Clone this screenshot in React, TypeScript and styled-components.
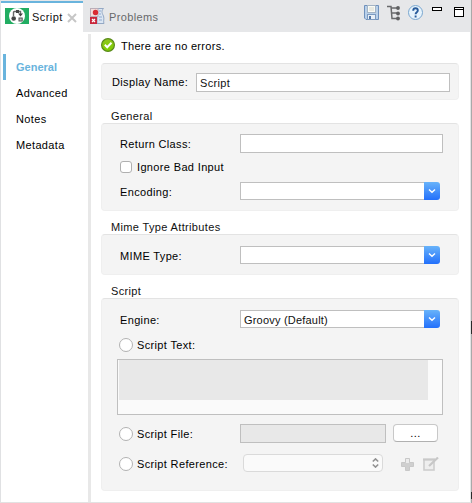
import React from "react";
import styled, { createGlobalStyle } from "styled-components";

const GlobalStyle = createGlobalStyle`
  * { box-sizing: border-box; }
  body {
    margin: 0;
    background: #fff;
    color: #111;
    font: 11px/14px "Liberation Sans", Arial, sans-serif;
    letter-spacing: 0.35px;
  }
  svg { display: block; flex: none; }
`;

const Screen = styled.div`
  display: flex;
  width: 472px;
  height: 503px;
  overflow: hidden;
`;

const WindowEdge = styled.div`
  width: 1px;
  flex: none;
  background: linear-gradient(
    #a9a9a9 321px, #2b2b2b 321px, #2b2b2b 334px,
    #a9a9a9 334px, #a9a9a9 492px, #2b2b2b 492px, #2b2b2b 499px, #a9a9a9 499px
  );
`;

const Window = styled.div`
  width: 471px;
  flex: none;
  display: flex;
  flex-direction: column;
  border-left: 1px solid #e0e1e3;
  border-right: 1px solid #e4e4e5;
  border-bottom: 1px solid #e2e2e2;
`;

const TabBar = styled.header`
  height: 32px;
  flex: none;
  display: flex;
  background: #e6e7e9;
`;

const Tab = styled.div<{ $active?: boolean }>`
  display: flex;
  align-items: center;
  width: ${(p) => (p.$active ? 82 : 90)}px;
  padding: ${(p) => (p.$active ? "0 0 3px 4px" : "0 0 3px 7px")};
  margin-top: 1px;
  border-top: 2px solid ${(p) => (p.$active ? "#69b4dd" : "transparent")};
  background: ${(p) => (p.$active ? "#fff" : "transparent")};
  color: ${(p) => (p.$active ? "#111" : "#68696b")};
`;

const TabLabel = styled.span`
  width: 35px;
  margin-left: 3px;
  padding-top: 2px;
  white-space: nowrap;
  letter-spacing: 0.45px;
`;

const ProblemsLabel = styled(TabLabel)`
  margin-left: 4px;
  letter-spacing: 0.35px;
`;

const CloseSlot = styled.span`
  padding-top: 3px;
`;

const Tools = styled.div`
  display: flex;
  align-items: flex-start;
  margin-left: auto;
  padding: 5px 6px 0 0;
`;

const Spacer = styled.span<{ $w: number }>`
  width: ${(p) => p.$w}px;
  flex: none;
`;

const Body = styled.div`
  flex: 1;
  display: flex;
`;

const Sidebar = styled.nav`
  width: 90px;
  flex: none;
  margin-top: 2px;
  padding: 20px 0 0 2px;
  border-right: 3px solid #e8e8e8;
`;

const NavItem = styled.div<{ $active?: boolean }>`
  height: 26px;
  display: flex;
  align-items: center;
  padding-left: 10px;
  border-left: 3px solid ${(p) => (p.$active ? "#69b4dd" : "transparent")};
  color: ${(p) => (p.$active ? "#69b4dd" : "#000")};
  font-weight: ${(p) => (p.$active ? 700 : 400)};
  letter-spacing: ${(p) => (p.$active ? 0 : 0.35)}px;
`;

const Main = styled.main`
  flex: 1;
  padding: 0 11px 0 10px;
`;

const Status = styled.div`
  display: flex;
  align-items: center;
  gap: 6px;
  height: 31px;
  padding-bottom: 5px;
  color: #000;
`;

const StatusText = styled.span`
  padding-top: 2px;
  letter-spacing: 0.3px;
`;

const Heading = styled.h2`
  margin: 0;
  height: 23px;
  padding: 9px 0 0 10px;
  font: inherit;
`;

const Panel = styled.section<{ $h: number }>`
  height: ${(p) => p.$h}px;
  display: flex;
  flex-direction: column;
  padding: 10px 0 0 18px;
  background: #f4f4f4;
  border: 1px solid #efefef;
  border-top-color: #e3e3e3;
  border-radius: 4px;
`;

const NamePanel = styled(Panel)`
  padding: 9px 0 0 10px;
`;

const Row = styled.div<{ $h: number; $mt?: number }>`
  flex: none;
  height: ${(p) => p.$h}px;
  margin-top: ${(p) => p.$mt ?? 0}px;
  display: flex;
  align-items: flex-start;
`;

const Label = styled.label<{ $w: number; $top?: number }>`
  width: ${(p) => p.$w}px;
  flex: none;
  white-space: nowrap;
  margin-top: ${(p) => p.$top ?? 3}px;
  color: #000;
`;

const Field = styled.div<{ $w: number; $disabled?: boolean }>`
  width: ${(p) => p.$w}px;
  height: 19px;
  border: 1px solid #bfbfbf;
  background: ${(p) => (p.$disabled ? "#e8e8e8" : "#fff")};
  padding: 2px 3px 0;
`;

const Combo = styled.div`
  display: flex;
  width: 200px;
  height: 18px;
`;

const ComboValue = styled.div`
  flex: 1;
  border: 1px solid #bfbfbf;
  border-right: 0;
  background: #fff;
  padding: 2px 3px 0;
  letter-spacing: 0.2px;
`;

const ComboButton = styled.div`
  width: 16px;
  display: grid;
  place-items: center;
  border-radius: 0 3px 3px 0;
  background: linear-gradient(#68b3fa, #2370fb);
`;

const Check = styled.span`
  width: 12px;
  height: 12px;
  margin-right: 5px;
  border: 1px solid #b0b0b0;
  border-radius: 3px;
  background: #fff;
`;

const Radio = styled.span<{ $top?: number }>`
  width: 14px;
  height: 14px;
  margin: ${(p) => p.$top ?? 0}px 4px 0 -1px;
  flex: none;
  border: 1px solid #b2b2b2;
  border-radius: 50%;
  background: #fff;
`;

const ScriptArea = styled.div`
  width: 326px;
  height: 56px;
  flex: none;
  margin: 7px 0 0 -3px;
  border: 1px solid #bfbfbf;
  background: #fafafa;
  padding: 0 14px 14px 1px;
`;

const ScriptFill = styled.div`
  height: 100%;
  background: #e8e8e8;
`;

const Browse = styled.button`
  width: 45px;
  height: 18px;
  margin-left: 7px;
  padding: 0 0 1px;
  border: 1px solid #c8c8c8;
  border-bottom-color: #b0b0b0;
  border-radius: 4px;
  background: #fff;
  color: #000;
  font: inherit;
  letter-spacing: 0.4px;
`;

const Reference = styled.div`
  width: 140px;
  height: 18px;
  margin-left: 3px;
  display: flex;
  align-items: center;
  justify-content: flex-end;
  padding-right: 3px;
  border: 1px solid #dadada;
  border-radius: 4px;
  background: #fafafa;
`;

const ActionIcon = styled.span<{ $top: number; $left: number }>`
  margin: ${(p) => p.$top}px 0 0 ${(p) => p.$left}px;
`;

const ScriptIcon = () => (
  <svg width="24" height="16" viewBox="0 0 24 16">
    <rect width="24" height="16" fill="#22ad62" />
    <circle cx="12" cy="8" r="8" fill="#fff" />
    <path d="M8.500 8V4.500Q8.500 3.500 9.500 3.500H15.500V6" fill="none" stroke="#666" strokeWidth="1.400" />
    <path d="M13 5.500h5l-2.500 3z" fill="#444" />
    <rect x="11" y="2" width="3" height="3" fill="#444" />
    <circle cx="8.700" cy="10.500" r="2.300" fill="#444" />
    <rect x="14" y="10" width="3.200" height="3" fill="#bbb" stroke="#555" />
  </svg>
);

const CloseIcon = () => (
  <svg width="10" height="10" viewBox="0 0 10 10">
    <path d="M1 1l8 8M9 1L1 9" stroke="#c6c6c6" strokeWidth="2" />
  </svg>
);

const ProblemsIcon = () => (
  <svg width="15" height="16" viewBox="0 0 15 16">
    <path d="M1 .5h12.500c-2 2-2 4 0 7.500 1 3-.5 5.500.5 7.500H7V8H.5z" fill="#dbe6f3" stroke="#94a8c4" />
    <path d="M9 3h2M9 6h2M9 9h3M9 12h3" stroke="#90aacf" />
    <rect x=".5" y=".5" width="7.500" height="8" fill="#f3dedc" stroke="#bbaeb8" />
    <circle cx="5.500" cy="4.500" r="2.700" fill="#d92c34" />
    <rect y="9" width="7" height="7" fill="#c9283d" />
    <path d="M2 11l3 3M5 11l-3 3" stroke="#fff" strokeWidth="1.200" />
  </svg>
);

const SaveIcon = () => (
  <svg width="15" height="15" viewBox="0 0 15 15">
    <path d="M.5.5h14v14H2l-1.500-1.500z" fill="#b9d0e9" stroke="#6f91bc" />
    <rect x="3.500" y=".5" width="8" height="7" fill="#fafbf5" stroke="#a4b4c5" />
    <path d="M5 3h5M5 5h5" stroke="#d7d8cf" />
    <rect x="3.500" y="9.500" width="8" height="5" fill="#e9f0f7" stroke="#7d9bc0" />
    <rect x="5" y="11" width="2" height="3" fill="#547aaa" />
  </svg>
);

const TreeIcon = () => (
  <svg width="13" height="16" viewBox="0 0 13 16">
    <path d="M0 1.500h4l1 12h6M4 3h7M4 8h7" fill="none" stroke="#68696b" strokeWidth="1.500" />
    <g fill="#5e5f61">
      <circle cx="11" cy="3" r="1.900" />
      <circle cx="11" cy="8.500" r="1.900" />
      <circle cx="11" cy="13.500" r="1.900" />
    </g>
  </svg>
);

const HelpIcon = () => (
  <svg width="16" height="16" viewBox="0 0 16 16">
    <circle cx="7.500" cy="7.500" r="7" fill="#e6f3fc" stroke="#79a6cf" />
    <path d="M5.200 5.700Q5.200 3.300 7.500 3.300T9.800 5.500C9.800 7.200 7.600 7.200 7.600 9.200M7.600 10.500v2" fill="none" stroke="#285b9b" strokeWidth="1.900" />
  </svg>
);

const MinimizeIcon = () => (
  <svg width="10" height="6" viewBox="0 0 10 6">
    <rect x=".5" y="2.500" width="9" height="3" fill="#fff" stroke="#000" />
  </svg>
);

const MaximizeIcon = () => (
  <svg width="10" height="12" viewBox="0 0 10 12">
    <rect x=".5" y="2.500" width="9" height="9" fill="#fff" stroke="#000" />
    <path d="M0 4.500h10" stroke="#000" />
  </svg>
);

const OkIcon = () => (
  <svg width="14" height="14" viewBox="0 0 14 14">
    <defs>
      <linearGradient id="ok" x2="0" y2="1">
        <stop stopColor="#8fc51d" />
        <stop offset="1" stopColor="#7fd000" />
      </linearGradient>
    </defs>
    <circle cx="7" cy="7" r="6.400" fill="url(#ok)" stroke="#5a8a1c" strokeWidth="1.200" />
    <path d="M3.800 6.800l2.400 2.400 4.300-4.500" fill="none" stroke="#fff" strokeWidth="2" />
  </svg>
);

const Chevron = () => (
  <svg width="8" height="6" viewBox="0 0 8 6">
    <path d="M1 1.500l3 2.800 3-2.800" fill="none" stroke="#fff" strokeWidth="1.400" />
  </svg>
);

const UpDownIcon = () => (
  <svg width="7" height="10" viewBox="0 0 7 10">
    <path d="M.8 3.500l2.700-2.600 2.700 2.600M.8 6.500l2.700 2.600 2.700-2.600" fill="none" stroke="#929292" strokeWidth="1.600" />
  </svg>
);

const PlusIcon = () => (
  <svg width="13" height="13" viewBox="0 0 13 13">
    <path d="M4.500.5h4v4h4v4h-4v4h-4v-4h-4v-4h4z" fill="#cfcfcf" stroke="#c8c8c8" />
    <path d="M5 1h3v4H5z" fill="#ececec" />
  </svg>
);

const EditIcon = () => (
  <svg width="16" height="14" viewBox="0 0 16 14">
    <rect x="1" y="2.500" width="10" height="10.500" fill="#eee" stroke="#cdcdcd" strokeWidth="1.600" />
    <path d="M0 2.500h12" stroke="#c9c9c9" strokeWidth="2" />
    <path d="M6 9l9-8.500" stroke="#c7c7c7" strokeWidth="2.200" />
  </svg>
);

function ComboBox({ value }: { value?: string }) {
  return (
    <Combo>
      <ComboValue>{value}</ComboValue>
      <ComboButton><Chevron /></ComboButton>
    </Combo>
  );
}

export default function App() {
  return (
    <Screen>
      <GlobalStyle />
      <Window>
        <TabBar>
          <Tab $active>
            <ScriptIcon />
            <TabLabel>Script</TabLabel>
            <CloseSlot><CloseIcon /></CloseSlot>
          </Tab>
          <Tab>
            <ProblemsIcon />
            <ProblemsLabel>Problems</ProblemsLabel>
          </Tab>
          <Tools>
            <SaveIcon />
            <Spacer $w={8} />
            <TreeIcon />
            <Spacer $w={8} />
            <HelpIcon />
            <Spacer $w={8} />
            <MinimizeIcon />
            <Spacer $w={12} />
            <MaximizeIcon />
          </Tools>
        </TabBar>
        <Body>
          <Sidebar>
            <NavItem $active>General</NavItem>
            <NavItem>Advanced</NavItem>
            <NavItem>Notes</NavItem>
            <NavItem>Metadata</NavItem>
          </Sidebar>
          <Main>
            <Status>
              <OkIcon />
              <StatusText>There are no errors.</StatusText>
            </Status>
            <NamePanel $h={37}>
              <Row $h={19}>
                <Label $w={84} $top={2}>Display Name:</Label>
                <Field $w={254}>Script</Field>
              </Row>
            </NamePanel>

            <Heading>General</Heading>
            <Panel $h={88}>
              <Row $h={19}>
                <Label $w={120}>Return Class:</Label>
                <Field $w={203} />
              </Row>
              <Row $h={12} $mt={8}>
                <Check />
                <Label $w={100} $top={-1}>Ignore Bad Input</Label>
              </Row>
              <Row $h={18} $mt={9}>
                <Label $w={120}>Encoding:</Label>
                <ComboBox />
              </Row>
            </Panel>

            <Heading>Mime Type Attributes</Heading>
            <Panel $h={41}>
              <Row $h={18} $mt={1}>
                <Label $w={120}>MIME Type:</Label>
                <ComboBox />
              </Row>
            </Panel>

            <Heading>Script</Heading>
            <Panel $h={193}>
              <Row $h={18} $mt={1}>
                <Label $w={120}>Engine:</Label>
                <ComboBox value="Groovy (Default)" />
              </Row>
              <Row $h={14} $mt={10}>
                <Radio />
                <Label $w={103} $top={0}>Script Text:</Label>
              </Row>
              <ScriptArea>
                <ScriptFill />
              </ScriptArea>
              <Row $h={19} $mt={9}>
                <Radio $top={3} />
                <Label $w={103}>Script File:</Label>
                <Field $w={146} $disabled />
                <Browse>...</Browse>
              </Row>
              <Row $h={18} $mt={11}>
                <Radio $top={3} />
                <Label $w={103}>Script Reference:</Label>
                <Reference><UpDownIcon /></Reference>
                <ActionIcon $top={4} $left={18}><PlusIcon /></ActionIcon>
                <ActionIcon $top={3} $left={9}><EditIcon /></ActionIcon>
              </Row>
            </Panel>
          </Main>
        </Body>
      </Window>
      <WindowEdge />
    </Screen>
  );
}
